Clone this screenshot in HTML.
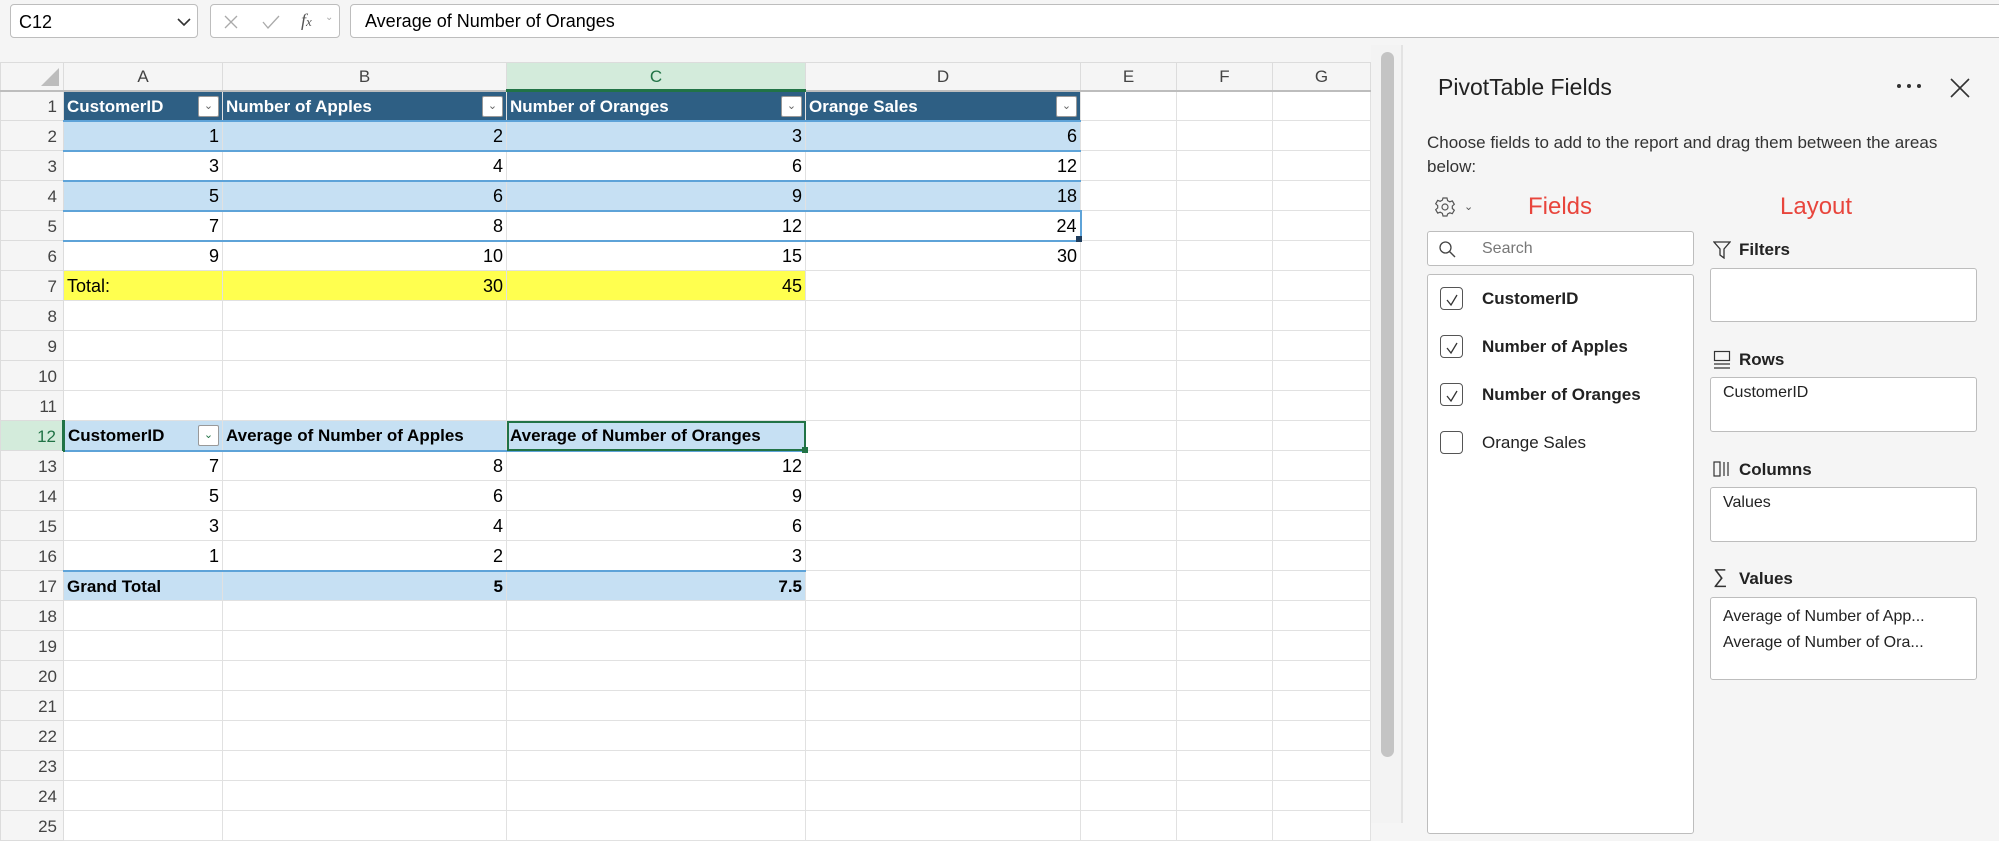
<!DOCTYPE html>
<html><head><meta charset="utf-8"><style>
*{box-sizing:border-box;margin:0;padding:0}
body{width:1999px;height:823px;overflow:hidden;background:#f5f5f5;font-family:"Liberation Sans",sans-serif;position:relative;color:#000}
.abs{position:absolute}
table{border-collapse:collapse;table-layout:fixed;position:absolute;left:0;top:62px;background:#fff}
td{height:30px;border:1px solid #e1e1e1;font-size:18px;padding:2px 3px 0;white-space:nowrap;overflow:visible;position:relative;text-align:right;vertical-align:middle}
td.rh{background:#f5f5f5;color:#444;text-align:right;padding-right:6px;border-color:#dcdcdc;font-size:17px}
tr.ch td{height:28px;background:#f5f5f5;text-align:center;color:#444;font-size:17px;border-color:#dcdcdc;border-bottom:2px solid #bdbdbd}
td.L{text-align:left}
.h1{background:#2e5f84;color:#fff;font-weight:bold;font-size:17px;text-align:left}
.b{background:#c6e0f3}
.bb{border-bottom:2px solid #5ea3d8}
.y{background:#ffff4f}
.pv{background:#c6e0f3;font-weight:bold;font-size:17px}
.fb{position:absolute;right:3px;top:4px;width:21px;height:21px;background:#fff;border:1px solid #999;border-radius:2px;font-size:11px;color:#666;text-align:center;line-height:19px;font-weight:normal}
.pn{font-family:"Liberation Sans",sans-serif;color:#222}
.box{position:absolute;background:#fff;border:1px solid #bdbdbd;border-radius:3px}
.cb{position:absolute;left:1440px;width:23px;height:23px;border:1.5px solid #555;border-radius:4px;background:#fff}
.fl{position:absolute;left:1482px;font-size:17px;font-weight:bold;color:#222}
.lb{position:absolute;font-size:17px;font-weight:bold;color:#222}
</style></head><body>
<div class="box" style="left:10px;top:4px;width:188px;height:34px;border-radius:4px"><span class="abs" style="left:8px;top:7px;font-size:18px">C12</span><svg class="abs" style="left:166px;top:12px" width="14" height="10"><path d="M1 2 L7 8 L13 2" stroke="#333" stroke-width="1.6" fill="none"/></svg></div>
<div class="box" style="left:210px;top:4px;width:130px;height:34px;border-radius:4px">
<svg class="abs" style="left:12px;top:9px" width="16" height="16"><path d="M2 2L14 14M14 2L2 14" stroke="#aaa" stroke-width="1.3"/></svg>
<svg class="abs" style="left:50px;top:9px" width="20" height="16"><path d="M2 8L7 14L18 2" stroke="#aaa" stroke-width="1.3" fill="none"/></svg>
<span class="abs" style="left:90px;top:5px;font-family:'Liberation Serif',serif;font-style:italic;font-size:18px;color:#555">f<span style="font-size:13px">x</span></span>
<span class="abs" style="left:114px;top:7px;font-size:10px;color:#aaa">⌄</span></div>
<div class="box" style="left:350px;top:4px;width:1660px;height:34px;border-radius:4px"><span class="abs" style="left:14px;top:6px;font-size:18px">Average of Number of Oranges</span></div>
<table>
<colgroup><col style="width:63px"><col style="width:159px"><col style="width:284px"><col style="width:299px"><col style="width:275px"><col style="width:96px"><col style="width:96px"><col style="width:98px"></colgroup>
<tr class="ch"><td style="position:relative"><svg class="abs" style="right:4px;bottom:4px" width="18" height="18"><path d="M18 0L18 18L0 18Z" fill="#bdbdbd"/></svg></td><td>A</td><td>B</td><td style="background:#d3ebdb;color:#217346;border-bottom:3px solid #217346">C</td><td>D</td><td>E</td><td>F</td><td>G</td></tr>
<tr><td class="rh">1</td><td class="h1 bb">CustomerID<span class="fb">⌄</span></td><td class="h1 bb">Number of Apples<span class="fb">⌄</span></td><td class="h1 bb">Number of Oranges<span class="fb">⌄</span></td><td class="h1 bb">Orange Sales<span class="fb">⌄</span></td><td></td><td></td><td></td></tr>
<tr><td class="rh">2</td><td class="b bb">1</td><td class="b bb">2</td><td class="b bb">3</td><td class="b bb">6</td><td></td><td></td><td></td></tr>
<tr><td class="rh">3</td><td class="bb">3</td><td class="bb">4</td><td class="bb">6</td><td class="bb">12</td><td></td><td></td><td></td></tr>
<tr><td class="rh">4</td><td class="b bb">5</td><td class="b bb">6</td><td class="b bb">9</td><td class="b bb">18</td><td></td><td></td><td></td></tr>
<tr><td class="rh">5</td><td class="bb">7</td><td class="bb">8</td><td class="bb">12</td><td class="bb" style="border-right:2px solid #5ea3d8">24<span class="abs" style="right:-2px;bottom:-2px;width:6px;height:6px;background:#1f3d5c"></span></td><td></td><td></td><td></td></tr>
<tr><td class="rh">6</td><td>9</td><td>10</td><td>15</td><td>30</td><td></td><td></td><td></td></tr>
<tr><td class="rh">7</td><td class="y L">Total:</td><td class="y">30</td><td class="y">45</td><td></td><td></td><td></td><td></td></tr>
<tr><td class="rh">8</td><td></td><td></td><td></td><td></td><td></td><td></td><td></td></tr>
<tr><td class="rh">9</td><td></td><td></td><td></td><td></td><td></td><td></td><td></td></tr>
<tr><td class="rh">10</td><td></td><td></td><td></td><td></td><td></td><td></td><td></td></tr>
<tr><td class="rh">11</td><td></td><td></td><td></td><td></td><td></td><td></td><td></td></tr>
<tr><td class="rh" style="background:#d3ebdb;color:#217346;border-right:3px solid #217346">12</td><td class="pv L bb">CustomerID<span class="fb" style="color:#217346">⌄</span></td><td class="pv L bb">Average of Number of Apples</td><td class="pv L bb" style="outline:2px solid #217346;outline-offset:-2px">Average of Number of Oranges<span class="abs" style="right:-3px;bottom:-3px;width:6px;height:6px;background:#217346"></span></td><td></td><td></td><td></td><td></td></tr>
<tr><td class="rh">13</td><td>7</td><td>8</td><td>12</td><td></td><td></td><td></td><td></td></tr>
<tr><td class="rh">14</td><td>5</td><td>6</td><td>9</td><td></td><td></td><td></td><td></td></tr>
<tr><td class="rh">15</td><td>3</td><td>4</td><td>6</td><td></td><td></td><td></td><td></td></tr>
<tr><td class="rh">16</td><td class="bb">1</td><td class="bb">2</td><td class="bb">3</td><td></td><td></td><td></td><td></td></tr>
<tr><td class="rh">17</td><td class="pv L">Grand Total</td><td class="pv">5</td><td class="pv">7.5</td><td></td><td></td><td></td><td></td></tr>
<tr><td class="rh">18</td><td></td><td></td><td></td><td></td><td></td><td></td><td></td></tr>
<tr><td class="rh">19</td><td></td><td></td><td></td><td></td><td></td><td></td><td></td></tr>
<tr><td class="rh">20</td><td></td><td></td><td></td><td></td><td></td><td></td><td></td></tr>
<tr><td class="rh">21</td><td></td><td></td><td></td><td></td><td></td><td></td><td></td></tr>
<tr><td class="rh">22</td><td></td><td></td><td></td><td></td><td></td><td></td><td></td></tr>
<tr><td class="rh">23</td><td></td><td></td><td></td><td></td><td></td><td></td><td></td></tr>
<tr><td class="rh">24</td><td></td><td></td><td></td><td></td><td></td><td></td><td></td></tr>
<tr><td class="rh">25</td><td></td><td></td><td></td><td></td><td></td><td></td><td></td></tr>
</table>
<div class="abs" style="left:1371px;top:45px;width:31px;height:778px;background:#f3f3f3"></div>
<div class="abs" style="left:1381px;top:52px;width:13px;height:705px;background:#c4c4c4;border-radius:7px"></div>
<div class="abs" style="left:1401px;top:45px;width:2px;height:778px;background:#e3e3e3"></div>
<div class="abs pn" style="left:1438px;top:74px;font-size:23px">PivotTable Fields</div>
<div class="abs" style="left:1897px;top:84px;width:26px;height:5px">
<span class="abs" style="left:0;top:0;width:4px;height:4px;border-radius:2px;background:#333"></span><span class="abs" style="left:10px;top:0;width:4px;height:4px;border-radius:2px;background:#333"></span><span class="abs" style="left:20px;top:0;width:4px;height:4px;border-radius:2px;background:#333"></span></div>
<svg class="abs" style="left:1950px;top:78px" width="20" height="20"><path d="M1 1L19 19M19 1L1 19" stroke="#333" stroke-width="1.6"/></svg>
<div class="abs pn" style="left:1427px;top:131px;font-size:17px;line-height:24px;width:540px;color:#333">Choose fields to add to the report and drag them between the areas below:</div>
<svg class="abs" style="left:1434px;top:196px" width="22" height="22" viewBox="0 0 22 22"><circle cx="11" cy="11" r="3" fill="none" stroke="#555" stroke-width="1.2"/><path d="M9 2h4l.6 2.6 2.2 1.2 2.5-.9 2 3.4-2 1.8v2.4l2 1.8-2 3.4-2.5-.9-2.2 1.2L13 20H9l-.6-2.6-2.2-1.2-2.5.9-2-3.4 2-1.8V9.6l-2-1.8 2-3.4 2.5.9 2.2-1.2z" fill="none" stroke="#555" stroke-width="1.2"/></svg>
<span class="abs" style="left:1464px;top:200px;font-size:11px;color:#555">⌄</span>
<div class="abs" style="left:1528px;top:193px;font-size:24px;color:#e8453c">Fields</div>
<div class="abs" style="left:1780px;top:193px;font-size:24px;color:#e8453c">Layout</div>
<div class="box" style="left:1427px;top:231px;width:267px;height:35px"><svg class="abs" style="left:10px;top:8px" width="18" height="18"><circle cx="7.5" cy="7.5" r="5.5" fill="none" stroke="#444" stroke-width="1.3"/><path d="M11.5 11.5L17 17" stroke="#444" stroke-width="1.4"/></svg><span class="abs" style="left:54px;top:8px;font-size:16px;color:#777">Search</span></div>
<div class="box" style="left:1427px;top:274px;width:267px;height:560px"></div>
<div class="cb" style="top:287px"></div><div class="cb" style="top:335px"></div><div class="cb" style="top:383px"></div><div class="cb" style="top:431px"></div>
<svg class="abs" style="left:1443px;top:290px" width="18" height="120"><path d="M4 10L8 15L14 5M4 58L8 63L14 53M4 106L8 111L14 101" stroke="#333" stroke-width="1.3" fill="none"/></svg>
<div class="fl" style="top:289px">CustomerID</div>
<div class="fl" style="top:337px">Number of Apples</div>
<div class="fl" style="top:385px">Number of Oranges</div>
<div class="fl" style="top:433px;font-weight:normal">Orange Sales</div>
<svg class="abs" style="left:1713px;top:241px" width="18" height="18"><path d="M1 1H17L11 8V17L7 14V8Z" fill="none" stroke="#333" stroke-width="1.3"/></svg>
<div class="lb" style="left:1739px;top:240px">Filters</div>
<div class="box" style="left:1710px;top:268px;width:267px;height:54px"></div>
<svg class="abs" style="left:1713px;top:350px" width="18" height="20"><rect x="1.5" y="1.5" width="15" height="9" fill="none" stroke="#333" stroke-width="1.2"/><path d="M1 14H17M1 18H17" stroke="#333" stroke-width="1.2"/></svg>
<div class="lb" style="left:1739px;top:350px">Rows</div>
<div class="box" style="left:1710px;top:377px;width:267px;height:55px"><span class="abs" style="left:12px;top:6px;font-size:16px;color:#222">CustomerID</span></div>
<svg class="abs" style="left:1713px;top:460px" width="20" height="18"><rect x="1" y="2" width="6" height="14" fill="none" stroke="#333" stroke-width="1.2"/><path d="M11 2V16M15 2V16" stroke="#333" stroke-width="1.2"/></svg>
<div class="lb" style="left:1739px;top:460px">Columns</div>
<div class="box" style="left:1710px;top:487px;width:267px;height:55px"><span class="abs" style="left:12px;top:6px;font-size:16px;color:#222">Values</span></div>
<div class="abs" style="left:1713px;top:566px;font-size:20px;color:#333">∑</div>
<div class="lb" style="left:1739px;top:569px">Values</div>
<div class="box" style="left:1710px;top:597px;width:267px;height:83px"><span class="abs" style="left:12px;top:6px;font-size:16px;color:#222;line-height:26px">Average of Number of App...<br>Average of Number of Ora...</span></div>
</body></html>
